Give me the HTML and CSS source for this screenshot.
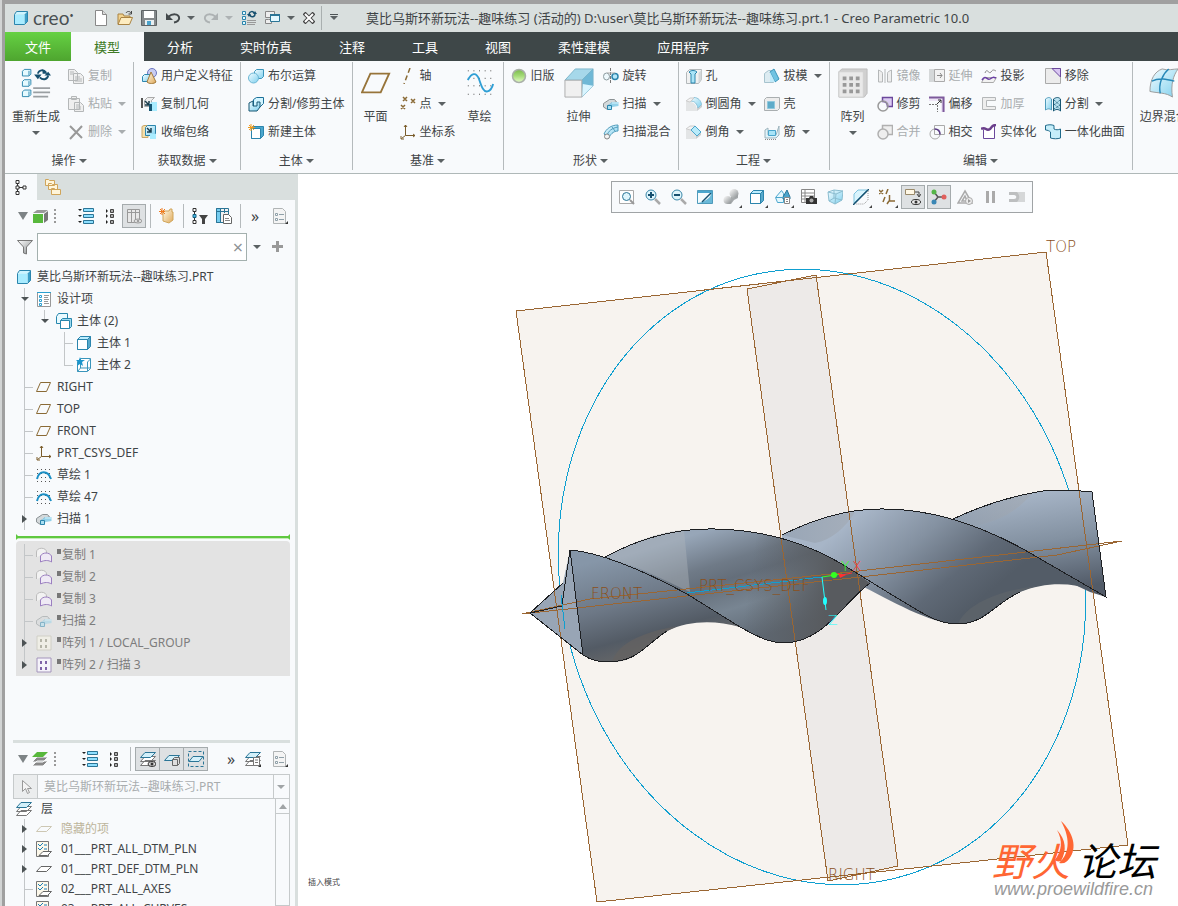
FILE: index.html
```html
<!DOCTYPE html>
<html lang="zh-CN">
<head>
    <meta charset="UTF-8" />
    <meta name="viewport" content="width=device-width, initial-scale=1" />
    <title>Creo Parametric 10.0</title>
    <link rel="stylesheet" href="styles.css">
</head>
<body>
    <svg class="sprite" aria-hidden="true">
        <defs>
            <linearGradient id="gb" x1="0" y1="0" x2="1" y2="1"><stop offset="0" stop-color="#f2fcff"/><stop offset="1" stop-color="#7fd0ee"/></linearGradient>
            <linearGradient id="gt" x1="0" y1="0" x2="1" y2="1"><stop offset="0" stop-color="#fffbea"/><stop offset="1" stop-color="#dfa95a"/></linearGradient>
            <linearGradient id="gg" x1="0" y1="0" x2="1" y2="1"><stop offset="0" stop-color="#fff"/><stop offset="1" stop-color="#858a8c"/></linearGradient>
            <linearGradient id="gn" x1="0" y1="0" x2="0" y2="1"><stop offset="0" stop-color="#79b94a"/><stop offset=".5" stop-color="#a5dc78"/><stop offset="1" stop-color="#e5fbc8"/></linearGradient>
        </defs>
        <!-- title bar -->
        <symbol id="cube" viewBox="0 0 16 16"><path d="M1.500 4.500l2-3h11l-3 3z" fill="#cdf4ff"/><path d="M11.500 4.500l3-3v10l-3 3z" fill="#3c9fc8"/><path d="M1.500 4.500h10v10h-10z" fill="#a9ecff"/><path d="M1.500 4.500l2-3h11v10l-3 3h-10z" fill="none" stroke="#2b85ad"/></symbol>
        <symbol id="new" viewBox="0 0 16 16"><path d="M2.500 .5h7l4 4v11h-11z" fill="#fff" stroke="#888"/><path d="M9.500 .5v4h4" fill="#ddd" stroke="#888"/></symbol>
        <symbol id="open" viewBox="0 0 16 16"><path d="M1 14V4h5l1 2h6v2" fill="#f2d38f" stroke="#a98343"/><path d="M1 14.500l3-7h11.500l-3 7z" fill="#fdecc0" stroke="#a98343"/><path d="M9 3c1-2 4-2 5 0M14.500 1v3h-3" fill="none" stroke="#444"/></symbol>
        <symbol id="save" viewBox="0 0 16 16"><path d="M.5 .5h15v15H.500z" fill="#84898b" stroke="#5f6466"/><path d="M3 1h10v7H3z" fill="#fff"/><path d="M4 10h9v5H4z" fill="#e8eef0"/><path d="M6 11h4v4H6z" fill="#4aa3cc"/></symbol>
        <symbol id="undo" viewBox="0 0 16 16"><path d="M3 7c5-4 10-3 11 0s-2 5-5 5.500" fill="none" stroke="#43494b" stroke-width="2"/><path d="M1 3v7h7z" fill="#43494b"/></symbol>
        <symbol id="redo" viewBox="0 0 16 16"><path d="M13 7C8 3 3 4 2 7s2 5 5 5.500" fill="none" stroke="#adb2b3" stroke-width="2"/><path d="M15 3v7H8z" fill="#adb2b3"/></symbol>
        <symbol id="regen" viewBox="0 0 32 32"><g fill="#e5faff" stroke="#2b85ad"><path d="M1.500 3.500l2-2h7v5l-2 2h-7zM1.500 14.500l2-2h7v5l-2 2h-7zM1.500 25.500l2-2h7v5l-2 2h-7z"/></g><path d="M8.500 3v5M8.500 14v5M8.500 25v5" stroke="#2b85ad"/><path d="M18 6c1-4 6-5 9-1M29 8c-1 5-6 5-9 2" stroke="#17506f" stroke-width="2" fill="none"/><path d="M14 7h8l-4 5zM25 8h7l-3-4zM23 1v5h5z" fill="#17506f"/><path d="M13 21.500h18M13 26h18M13 30.500h16" stroke="#9a9fa2" stroke-width="2"/></symbol>
        <symbol id="regen-s" viewBox="0 0 16 16"><path d="M1.500 1.500h3v3h-3zM1.500 6.500h3v3h-3zM1.500 11.500h3v3h-3z" fill="#e5faff" stroke="#2b85ad"/><path d="M8 4c1-3 4-3 5-1M14 4c0 3-4 4-5 1" fill="none" stroke="#17506f" stroke-width="1.500"/><path d="M6 4h4L8 7zM12 4h4l-2-3z" fill="#17506f"/><path d="M6 10.500h9M6 12.500h9M6 14.500h8" stroke="#999"/></symbol>
        <symbol id="windows" viewBox="0 0 16 16"><path d="M.5 1.500h9v6h-9zM3.500 9.500h-3v4h6v-4z" fill="#eee" stroke="#888"/><path d="M5.500 4.500h9v7h-9z" fill="#e5f8ff" stroke="#2b7596"/><path d="M5 4h10v2H5z" fill="#2b7596"/></symbol>
        <symbol id="closewin" viewBox="0 0 12 12"><path d="M1 1l10 10M11 1L1 11" stroke="#444" stroke-width="4"/><path d="M2 2l8 8M10 2l-8 8" stroke="#fff" stroke-width="2"/></symbol>
        <!-- ribbon -->
        <symbol id="copy" viewBox="0 0 16 16"><g fill="#efefef" stroke="#b4b7b8"><path d="M.5 1.500h6l3 3v8h-9zM5.500 5.500h7l3 3v7h-10z"/><path d="M7 9h5M7 11h7M7 13h7M2 4h4M2 6h3"/></g></symbol>
        <symbol id="paste" viewBox="0 0 16 16"><g fill="#efefef" stroke="#b4b7b8"><path d="M.5 2.500h11v11H.500zM3.500 .5h5v3h-5zM6.500 6.500h6l3 3v6h-9z"/><path d="M8 9h3M8 11h5M8 13h5"/></g></symbol>
        <symbol id="del" viewBox="0 0 16 16"><path d="M2 2l12 12M14 2L2 15" stroke="#999" stroke-width="2"/></symbol>
        <symbol id="udf" viewBox="0 0 16 16"><circle cx="11" cy="5" r="4.500" fill="#c9cdf2" stroke="#6b76c0"/><path d="M1.500 8.500l2-2h6v7h-8z" fill="url(#gb)" stroke="#2d87b0"/><path d="M10 4l5 10c-2 2-7 2-9 0z" fill="url(#gt)" stroke="#a37a3a"/></symbol>
        <symbol id="copygeo" viewBox="0 0 16 16"><path d="M1 2v10" stroke="#555" stroke-width="2"/><path d="M3.500 4.500l3-3h7l-3 3v6h-7z" fill="#eee" stroke="#aaa"/><path d="M4 5l4 4M8 5v4H4" stroke="#1b3d4c" stroke-width="1.500" fill="none"/><path d="M8 8l3-2h5v9H8z" fill="#a9ecff"/><path d="M8 8h3v7H8z" fill="#165673"/></symbol>
        <symbol id="shrink" viewBox="0 0 16 16"><path d="M1 2.500l2-1h4v12H1z" fill="#f6dfaa" stroke="#c9a869"/><path d="M4.500 3.500l2-2h8v8l-2 2h-8z" fill="url(#gb)" stroke="#2b85ad"/><path d="M6 4l4 4M10 4v4H6" stroke="#1b3d4c" fill="none" stroke-width="1.500"/><path d="M9 10h6v5H9z" fill="#a9ecff"/></symbol>
        <symbol id="bool" viewBox="0 0 16 16"><path d="M6.500 3.500l2-2h7v7l-2 2h-7z" fill="url(#gb)" stroke="#3a95bb"/><circle cx="5.500" cy="10" r="5" fill="url(#gb)" stroke="#6bb6d4"/></symbol>
        <symbol id="split" viewBox="0 0 16 16"><path d="M5.500 3.500l3-2h7v6l-4 4h-6z" fill="#d3f5ff" stroke="#1c7099"/><path d="M1 7l4-2v5h4V6h3v5l-3 4H1z" fill="url(#gb)" stroke="#165673"/></symbol>
        <symbol id="newbody" viewBox="0 0 16 16"><path d="M3.500 4.500l2-2h10v9l-3 3h-9z" fill="#4ba6cd" stroke="#2b85ad"/><path d="M3.500 4.500h9v10h-9z" fill="#fff" stroke="#2b85ad"/><path d="M3 0v7M0 3.500h7M1 1l5 5M6 1L1 6" stroke="#ef9b1f"/></symbol>
        <symbol id="plane" viewBox="0 0 32 32"><path d="M10 6h20l-9 20H1z" fill="none" stroke="#97743a" stroke-width="2"/></symbol>
        <symbol id="axis" viewBox="0 0 16 16"><path d="M10 0L4 16" stroke="#8a6a35" stroke-width="1.500" stroke-dasharray="5 3"/></symbol>
        <symbol id="point" viewBox="0 0 16 16"><path d="M3 1l4 4M7 1L3 5M11 3l4 4M15 3l-4 4M1 9l4 4M5 9l-4 4" stroke="#8a6a35" stroke-width="1.500"/></symbol>
        <symbol id="csys" viewBox="0 0 16 16"><path d="M5.500 1v10.500H15M5.500 11.500l-4 3M4 3l1.500-2L7 3M13 10l2 1.500-2 1.500M1 12v3h3" fill="none" stroke="#7a5c2a"/></symbol>
        <symbol id="sketch" viewBox="0 0 32 32"><path d="M3 3h28M3 11h28M3 19h28M3 28h28" stroke="#444" stroke-dasharray="1 5"/><path d="M3 13c4-8 9-9 12-1 3 9 5 14 9 13 4-1 5-4 6-8" fill="none" stroke="#2f9fd5" stroke-width="2"/></symbol>
        <symbol id="legacy" viewBox="0 0 16 16"><circle cx="8" cy="8" r="6.500" fill="url(#gn)" stroke="#a9b0a8" stroke-width="1.500"/></symbol>
        <symbol id="extrude" viewBox="0 0 32 32"><path d="M1 13L12 1h19L19 13z" fill="#a6d8ea" stroke="#7ab4cb"/><path d="M19 13L31 1v18L19 31z" fill="#6fb8d6" stroke="#7ab4cb"/><path d="M19 31l12-12L20 17z" fill="#d9f5ff"/><path d="M1 13h18v18H1z" fill="#f0f0f0" stroke="#aaa"/></symbol>
        <symbol id="revolve" viewBox="0 0 16 16"><path d="M7.500 0v16" stroke="#777" stroke-dasharray="3 1"/><ellipse cx="3.500" cy="8.500" rx="3" ry="3.500" fill="#eef9fd" stroke="#8b9a9f"/><circle cx="12" cy="8.500" r="3" fill="#b7e8fa" stroke="#2b85ad" stroke-width="1.500"/><path d="M4 5h8" stroke="#aaa"/></symbol>
        <symbol id="sweep" viewBox="0 0 16 16"><path d="M.5 7.500L6.500 3.500h5l2 2.500-5 1-4 3v3.500l-4-2.500z" fill="#d4d9db" stroke="#8b9295"/><path d="M4 10l5-4h6.500v4l-6 1-3 3z" fill="#94d2ea"/><path d="M9 7h6.500" stroke="#d9f3fc"/><path d="M4.500 9.500h4v4h-4z" fill="#a9dff2" stroke="#2b85ad"/></symbol>
        <symbol id="blend" viewBox="0 0 16 16"><path d="M1 10C3 5 8 1 15 1v6c-5 0-8 4-9 7z" fill="url(#gb)" stroke="#4f9bbb"/><path d="M4 12C5 7 9 4 15 3M9 3l3 4" fill="none" stroke="#4f9bbb"/><circle cx="4" cy="12.500" r="2.500" fill="#f4f4f4" stroke="#888"/></symbol>
        <symbol id="hole" viewBox="0 0 16 16"><path d="M.5 4.500l3-3h12v10l-3 4H.500z" fill="#f0f1f1" stroke="#b3b8ba"/><path d="M12.500 5v10l3-4V2z" fill="#d3d7d9"/><path d="M3 4c2-2 6-2 8 0L9 6v9H5V6z" fill="#a9e4f7" stroke="#2b85ad"/></symbol>
        <symbol id="round" viewBox="0 0 16 16"><path d="M0 6h5c4 1 6 4 6 9H0z" fill="#e3e5e6"/><path d="M11 15l5-4V8l-5 3z" fill="#c9cdcf"/><path d="M4.500 5L8 1.500c4 0 7 3 7.500 7L12 12C11 8 9 5 4.500 5z" fill="url(#gb)" stroke="#8cc3d9"/><path d="M0 5l4-3h4L4 6z" fill="#f3f3f3" stroke="#ccc"/></symbol>
        <symbol id="chamfer" viewBox="0 0 16 16"><path d="M0 6h5l5 5v4H0z" fill="#e3e5e6"/><path d="M10 15l5-4V8l-5 3z" fill="#c9cdcf"/><path d="M0 5l4-3h5L5 6z" fill="#f3f3f3" stroke="#ccc"/><path d="M5 6l4-4 6 6-4 4z" fill="#b9ebfa" stroke="#4ba6cd"/></symbol>
        <symbol id="draft" viewBox="0 0 16 16"><path d="M.5 5.500l4-3h5v12h-9z" fill="#dcebf1" stroke="#a6c3ce"/><path d="M6 4l4-3 5 10-4 3z" fill="#6fc3e2" stroke="#3a95bb"/><path d="M6 4v10h5z" fill="#bfeafa"/></symbol>
        <symbol id="shell" viewBox="0 0 16 16"><path d="M.5 3.500l2-2h13v11l-2 2H.500z" fill="#ececec" stroke="#a9aeb0"/><path d="M3.500 5.500h7v7h-7z" fill="#5eabc9" stroke="#8fc7dc"/></symbol>
        <symbol id="rib" viewBox="0 0 16 16"><path d="M1 6l3-2v7h8l3-9v9l-3 3H1z" fill="#dff3fa" stroke="#9db4bd"/><path d="M4.500 6.500h7v5h-7z" fill="#a9e4f7" stroke="#4ba6cd"/><path d="M1 15.500h12" stroke="#888" stroke-dasharray="1 1"/></symbol>
        <symbol id="pattern" viewBox="0 0 32 32"><path d="M1 4l3-3h27v26l-3 4H1z" fill="#d0d0d0" stroke="#bcbcbc"/><path d="M1 4h26v27H1z" fill="#e9e9e9" stroke="#d0d0d0"/><g fill="#999"><path d="M5 9h4v4H5zM12 9h4v4h-4zM19 9h4v4h-4zM5 16h4v4H5zM12 16h4v4h-4zM19 16h4v4h-4zM5 23h4v4H5zM12 23h4v4h-4zM19 23h4v4h-4z"/></g></symbol>
        <symbol id="mirror" viewBox="0 0 16 16"><path d="M1.500 2c4 2 4 2 4 4v8h-4zM14.500 2c-4 2-4 2-4 4v8h4zM8 1v14" fill="#eee" stroke="#b4b7b8"/></symbol>
        <symbol id="trim" viewBox="0 0 16 16"><path d="M5.500 1.500h10v9h-5c0-3-2-5-5-5z" fill="#dccdf2" stroke="#6b489c" stroke-width="1.500"/><circle cx="6" cy="10" r="5" fill="none" stroke="#999" stroke-width="1.500"/></symbol>
        <symbol id="merge" viewBox="0 0 16 16"><g fill="#eee" stroke="#b0b0b0" stroke-width="1.500"><path d="M5.500 1.500h10v9h-10z"/><circle cx="6" cy="10" r="5"/></g></symbol>
        <symbol id="extend" viewBox="0 0 16 16"><path d="M0 1h6v13H0z" fill="#d5d8d9"/><path d="M5.500 1.500h10v12h-10z" fill="#f2f2f2" stroke="#aaa"/><path d="M8 7.500h5M11 5l2 2.500-2 2.500" fill="none" stroke="#888"/></symbol>
        <symbol id="offset" viewBox="0 0 16 16"><path d="M0 1h16v15h-4V5H0z" fill="#eee5f6"/><path d="M0 1.500h14.500V16" fill="none" stroke="#7d5a9b" stroke-width="2"/><path d="M0 8.500h8M8.500 9v7" stroke="#777" stroke-dasharray="2 1"/><path d="M8 8l4-4M9 4h3v3" stroke="#333" fill="none"/></symbol>
        <symbol id="intersect" viewBox="0 0 16 16"><g fill="none" stroke="#aaa"><path d="M5.500 1.500h10v9h-10z"/><circle cx="6" cy="10" r="5"/></g><path d="M5.500 5c4 0 5.500 2 5.500 5.500" fill="none" stroke="#5b3b87" stroke-width="1.500"/></symbol>
        <symbol id="project" viewBox="0 0 16 16"><path d="M4 5c2-6 4 2 6-1s3-2 5-1" fill="none" stroke="#888"/><path d="M.5 14.500l3-5h12l-3 5z" fill="#f2f2f2" stroke="#aaa"/><path d="M1 12c4-6 5 1 8-1s3-2 6-1" fill="none" stroke="#6b3fa5" stroke-width="1.500"/></symbol>
        <symbol id="thicken" viewBox="0 0 16 16"><path d="M1.500 1.500h13v3h-9v6h9v3h-13z" fill="#eee" stroke="#b4b7b8"/></symbol>
        <symbol id="solidify" viewBox="0 0 16 16"><path d="M2.500 5.500v9h11V2" fill="#fff" stroke="#6b489c"/><path d="M0 5c5-3 5 3 9 0 3-3 2-4 6-4" fill="none" stroke="#6b3f8b" stroke-width="2.500"/></symbol>
        <symbol id="remove" viewBox="0 0 16 16"><path d="M.5 .5h15v15H.500z" fill="#ececec" stroke="#aaa"/><path d="M7 .5h8.500V9z" fill="#d9c6f2" stroke="#6b489c"/></symbol>
        <symbol id="splitq" viewBox="0 0 16 16"><path d="M.5 3c3-2 4-2 6 0v11c-3-2-4-1-6 0z" fill="url(#gb)" stroke="#4f9bbb"/><path d="M8.500 3c3-2 5-2 7 0v12c-2-2-5-2-7 0z" fill="#b9e2f0" stroke="#165673"/><path d="M9 4l6 5M9 8l6 5M15 4l-6 5M15 9l-6 4" stroke="#165673" stroke-dasharray="1 1"/></symbol>
        <symbol id="unify" viewBox="0 0 16 16"><path d="M.5 6V1.500c3-1 6-1 8.500 0V5c2 1 4 1 6.500 0v9c-3 1-7 1-10 0V8c-1-1-3-2-5-2z" fill="#c5eefa" stroke="#1f6a8a"/></symbol>
        <symbol id="boundary" viewBox="0 0 32 32"><path d="M1 25C1 12 6 4 14 1c6 2 12 0 17 0-5 7-8 16-6 30C18 26 10 27 1 25z" fill="url(#gb)" stroke="#999"/><path d="M12 27c-2-10 2-20 9-26M3 14c8-4 16-2 24 0" fill="none" stroke="#2788b8" stroke-width="1.500"/></symbol>
        <!-- panels -->
        <symbol id="treetab" viewBox="0 0 16 16"><path d="M4.500 4v9M5 8.500h5" stroke="#333"/><path d="M3 1.500h3v3H3zM3 7h3v3H3zM3 12.500h3v3H3zM10 7h3v3h-3z" fill="#fff" stroke="#333"/></symbol>
        <symbol id="folders" viewBox="0 0 16 16"><g fill="#fff5da" stroke="#d0a55a"><path d="M.5 6.500v-6h3l1 1h5v5zM3.500 10.500v-6h3l1 1h5v5zM6.500 15.500v-6h3l1 1h5v5z"/></g></symbol>
        <symbol id="greencube" viewBox="0 0 16 16"><path d="M1 6h10v9H1z" fill="#58b83c"/><path d="M1 5l4-3h11l-4 3z" fill="#999"/><path d="M12 6l4-3v9l-4 3z" fill="#777"/></symbol>
        <symbol id="list" viewBox="0 0 16 16"><path d="M5.500 .5h10v3h-10zM5.500 6.500h10v3h-10zM5.500 12.500h10v3h-10z" fill="#8edfff" stroke="#2b7596"/><path d="M0 1h4L2 3zM0 7h4L2 9zM0 13h4l-2 2z" fill="#222"/></symbol>
        <symbol id="listc" viewBox="0 0 16 16"><path d="M8.500 1.500h3v3h-3zM8.500 6.500h3v3h-3zM8.500 12.500h3v3h-3z" fill="#aaa" stroke="#444"/><path d="M4 1v4l2-2zM4 6v4l2-2zM4 12v4l2-2z" fill="#222"/></symbol>
        <symbol id="cols" viewBox="0 0 16 16"><path d="M1.500 1.500h12v13h-12zM1.500 4.500h12M5.500 2v12M9.500 2v12" fill="#e8e8e8" stroke="#999"/><ellipse cx="12" cy="13" rx="4" ry="2" fill="#ddd" stroke="#999"/><circle cx="12" cy="13" r="1" fill="#888"/></symbol>
        <symbol id="tag" viewBox="0 0 16 16"><path d="M4 3h6l1-2h2v3h1v8l-4 3-6-2z" fill="url(#gt)" stroke="#d0a55a"/><path d="M3 0v7M0 3.500h6M1 1l5 5M6 1L1 6" stroke="#ef7b1f"/></symbol>
        <symbol id="filtree" viewBox="0 0 16 16"><path d="M2.500 3v11" stroke="#333"/><path d="M1 .5h3v3H1zM1 12.500h3v3H1z" fill="#fff" stroke="#333"/><path d="M1 6.500h3v3H1z" fill="#4bb6e4" stroke="#17607f"/><path d="M7 7h9l-3 4v5h-3v-5z" fill="#444"/></symbol>
        <symbol id="coldoc" viewBox="0 0 16 16"><path d="M.5 .5h12v14H.500z" fill="#f2f2f2" stroke="#2b7596"/><path d="M.5 .5h4v14h-4z" fill="#76cdf0" stroke="#2b7596"/><path d="M1 3.500h12M8.500 1v4" stroke="#2b7596"/><path d="M7.500 6.500h5l3 3v6h-8z" fill="#fff" stroke="#666"/><path d="M9 10.500h4M9 12.500h5" stroke="#888"/></symbol>
        <symbol id="doc" viewBox="0 0 16 16"><path d="M1.500 .5h9l3 3v12h-12z" fill="#f4f4f4" stroke="#b0b4b5"/><path d="M3.500 5.500h2v2h-2zM3.500 10.500h2v2h-2zM7 6.500h5M7 11.500h5" fill="#fff" stroke="#8fa0a9"/><path d="M13 16l3-3v3z" fill="#333"/></symbol>
        <symbol id="funnel" viewBox="0 0 16 16"><path d="M.5 1.500h15L9.500 8v7l-3-1V8z" fill="url(#gg)" stroke="#777"/></symbol>
        <symbol id="design" viewBox="0 0 16 16"><path d="M1.500 1.500h13v14h-13z" fill="#fff" stroke="#999"/><path d="M1 1.500h14" stroke="#2ba0d0"/><path d="M3.500 4.500h2v2h-2zM3.500 8.500h2v2h-2zM3.500 12.500h2v2h-2z" fill="#fff" stroke="#2b9fd0"/><path d="M8 4.500h5M8 6.500h4M8 8.500h5M8 10.500h4M8 12.500h5" stroke="#999"/></symbol>
        <symbol id="bodies" viewBox="0 0 16 16"><path d="M.5 3.500l2-3h9v7l-3 3h-8z" fill="#e9faff" stroke="#2787ad"/><path d="M4.500 7.500l2-2h9v8l-2 2h-9z" fill="#9edaf0" stroke="#2787ad"/><path d="M4.500 7.500h9v8h-9z" fill="#fff" stroke="#2787ad"/></symbol>
        <symbol id="body" viewBox="0 0 16 16"><path d="M1.500 4.500l3-3h10v10l-3 3h-10z" fill="#57a9cb" stroke="#2b85ad"/><path d="M1.500 4.500l3-3h10l-3 3z" fill="#bdeeff" stroke="#2b85ad"/><path d="M1.500 4.500h10v10h-10z" fill="#fff" stroke="#2b85ad"/></symbol>
        <symbol id="bodystar" viewBox="0 0 16 16"><path d="M1.500 4.500l3-3h10v10l-3 3h-10zM4.500 2v9h10M4.500 11l-3 3.500M11.500 5v9M11.500 5l3-3" fill="#fff" stroke="#3a95bb"/><path d="M4 0l1 3h4L6 5l1 4-3-2-3 2 1-4-2-2h3z" fill="#1b95cc"/></symbol>
        <symbol id="plane-s" viewBox="0 0 16 16"><path d="M4.500 3.500h10l-4 9H.500z" fill="none" stroke="#8a6a35"/></symbol>
        <symbol id="sketch-s" viewBox="0 0 16 16"><path d="M1 2.500h14M1 6.500h14M1 10.500h14M1 14.500h14" stroke="#555" stroke-dasharray="1 3"/><path d="M1 12c2-9 11-9 14 0" fill="none" stroke="#1b8fc5" stroke-width="2"/></symbol>
        <symbol id="copyq" viewBox="0 0 16 16"><path d="M.5 10V5c0-5 10-5 10 0v2" fill="#f2f2f2" stroke="#bbb"/><path d="M4.500 15V9c2-4 9-4 11 0v6c-3-2-7-2-11 0z" fill="#efeaf5" stroke="#9b7fc0"/></symbol>
        <symbol id="patgray" viewBox="0 0 16 16"><path d="M1 1h14v14H1z" fill="#efeee6" stroke="#d0cfc6"/><path d="M4 4h2v3H4zM9 4h2v3H9zM4 10h2v3H4zM9 10h2v3H9z" fill="#b5b5a8"/></symbol>
        <symbol id="patpur" viewBox="0 0 16 16"><path d="M1 1h14v14H1z" fill="#f5f3fa" stroke="#a394bb"/><path d="M4 4h2v3H4zM9 4h2v3H9zM4 10h2v3H4zM9 10h2v3H9z" fill="#7f63a8"/></symbol>
        <symbol id="layersg" viewBox="0 0 16 16"><path d="M5 10h11l-5 5H0zM5 6h11l-5 5H0z" fill="#888" stroke="#f8fafc"/><path d="M5 1h11l-5 5H0z" fill="#58b83c"/></symbol>
        <symbol id="layers" viewBox="0 0 16 16"><path d="M5 9.500h10.500l-5 5H.500zM5 5.500h10.500l-5 5H.500z" fill="#fff" stroke="#777"/><path d="M5 1.500h10.500l-5 5H.500z" fill="#d3f0fa" stroke="#2b7596"/></symbol>
        <symbol id="layerseye" viewBox="0 0 16 16"><use href="#layers"/><ellipse cx="12" cy="13" rx="4" ry="2.500" fill="#ddd" stroke="#333"/><circle cx="12" cy="13" r="1.500" fill="#333"/></symbol>
        <symbol id="layercube" viewBox="0 0 16 16"><path d="M5 4.500h10.500l-5 5H.500z" fill="#d3f0fa" stroke="#2b7596"/><path d="M8.500 8.500l2-2h5v6l-2 2h-5zM8.500 8.500h5v6" fill="#ddd" stroke="#666"/></symbol>
        <symbol id="layersel" viewBox="0 0 16 16"><path d="M.5 .5h15v15H.500z" fill="none" stroke="#2b7596" stroke-dasharray="3 2"/><path d="M5 5.500h10l-4 5H1z" fill="#d3f0fa" stroke="#2b7596"/></symbol>
        <symbol id="layersdoc" viewBox="0 0 16 16"><use href="#layers"/><path d="M8.500 6.500h6v8h-6zM10 9h3M10 11.500h3" fill="#fff" stroke="#777"/><path d="M13 16l3-3v3z" fill="#333"/></symbol>
        <symbol id="pointer" viewBox="0 0 16 16"><path d="M4.500 1.500v11l3-3 2 5 2-1-2-4h4z" fill="#f4f4f4" stroke="#999"/></symbol>
        <symbol id="layer-h" viewBox="0 0 16 16"><path d="M5 5.500h10.500l-5 5H.500z" fill="none" stroke="#cdc7b3"/></symbol>
        <symbol id="layer-s" viewBox="0 0 16 16"><path d="M5 5.500h10.500l-5 5H.500z" fill="#fff" stroke="#666"/></symbol>
        <symbol id="layerrule" viewBox="0 0 16 16"><path d="M.5 .5h12v15H.500z" fill="#fdf8ea" stroke="#777"/><path d="M2 3l2 2 3-3M2 7l2 2 3-3M8 4h3M8 8h3" fill="none" stroke="#1b7fb8"/><path d="M7 10.500h8.500l-4 4H3z" fill="#fff" stroke="#666"/></symbol>
        <!-- graphics toolbar -->
        <symbol id="zfit" viewBox="0 0 16 16"><path d="M.5 1.500h14v13H.500z" fill="#fff" stroke="#aaa"/><circle cx="7.500" cy="7.500" r="4" fill="#dff5fc" stroke="#2b7596"/><path d="M11 11l4 4" stroke="#999" stroke-width="2"/></symbol>
        <symbol id="zin" viewBox="0 0 16 16"><circle cx="6" cy="6" r="5" fill="#dff5fc" stroke="#3a87a8"/><path d="M10 10l5 5" stroke="#aaa" stroke-width="2.500"/><path d="M3 6h6M6 3v6" stroke="#17506f" stroke-width="2"/></symbol>
        <symbol id="zout" viewBox="0 0 16 16"><circle cx="6" cy="6" r="5" fill="#dff5fc" stroke="#3a87a8"/><path d="M10 10l5 5" stroke="#aaa" stroke-width="2.500"/><path d="M3 6h6" stroke="#17506f" stroke-width="2"/></symbol>
        <symbol id="repaint" viewBox="0 0 16 16"><path d="M.5 1.500h15v13H.500z" fill="#6ab9d8" stroke="#4f9bbb"/><path d="M1 4h13c0 4-4 8-13 10z" fill="#f4fbfd"/><path d="M5 13l9-9" stroke="#17506f" stroke-width="1.500"/><path d="M1 2h14v2H1z" fill="#4ba6cd"/></symbol>
        <symbol id="shade" viewBox="0 0 16 16"><path d="M8 4v5l-4 2v4h4l3-4 4-2V4z" fill="#a5a9ab"/><circle cx="11" cy="4.500" r="4.500" fill="url(#gg)"/><circle cx="4.500" cy="11" r="4" fill="url(#gg)"/></symbol>
        <symbol id="views" viewBox="0 0 16 16"><path d="M.5 8.500l6-7 2 3v9h-6z" fill="#e4f7fd" stroke="#4ba6cd"/><path d="M8 8l4-7 3 7v2H8z" fill="#4ba6cd" stroke="#2b7596"/><path d="M1 8.500h8" stroke="#4ba6cd"/><path d="M9.500 8.500h5v6h-5zM11 10.500h2M11 12.500h2" fill="#fff" stroke="#888"/></symbol>
        <symbol id="camera" viewBox="0 0 16 16"><path d="M.5 .5h13v13H.500zM.5 4h13M.5 7h13M.5 10h13M4 1v12" fill="#fff" stroke="#888"/><path d="M5 9h3l1-2h3l1 2h3v6H5z" fill="#333"/><circle cx="10.500" cy="11.500" r="2" fill="#aaa"/></symbol>
        <symbol id="persp" viewBox="0 0 16 16"><path d="M1 3l6-2 9 1-1 9-7 4-6-3z" fill="url(#gb)" stroke="#8bbdd0"/><path d="M1 3l8 2 7-3M9 5l-1 10M7 1v8l8 2M7 9l-5 3" fill="none" stroke="#8bbdd0"/></symbol>
        <symbol id="section" viewBox="0 0 16 16"><path d="M1 5l4-4h9L1 14z" fill="#d9f4fd" stroke="#7fc3de"/><path d="M0 16L16 0" stroke="#17506f" stroke-width="1.500"/><path d="M15 2v9l-4 4H3" fill="none" stroke="#999" stroke-dasharray="1 1"/></symbol>
        <symbol id="datum" viewBox="0 0 16 16"><path d="M0 1l4 4M4 1L0 5M9 0L7 5M6 8l-2 5M10.500 6v6H16M10 12l-2 3" stroke="#8a6a35" stroke-width="1.500" fill="none"/></symbol>
        <symbol id="annot" viewBox="0 0 16 16"><path d="M.5 .5h9v5h-9z" fill="#fff8e6" stroke="#9a8a6b"/><path d="M10 3h4v4M12 5l2 3 2-3" stroke="#444" fill="none"/><ellipse cx="11" cy="13" rx="4.500" ry="2.500" fill="#eee" stroke="#333"/><circle cx="11" cy="13" r="1.500" fill="#333"/></symbol>
        <symbol id="spin" viewBox="0 0 16 16"><path d="M3 3l4 5-4 5M7 8h6" stroke="#555" stroke-width="1.500" fill="none"/><circle cx="3" cy="3" r="2.500" fill="#55b648"/><circle cx="3" cy="13" r="2.500" fill="#3a87b5"/><circle cx="13" cy="8" r="2.500" fill="#e0605d"/></symbol>
        <symbol id="sim" viewBox="0 0 16 16"><path d="M8 2l7 12H1zM8 7l2 5H5z" fill="none" stroke="#aaa" stroke-width="1.500"/><circle cx="12" cy="12" r="3.500" fill="#eee" stroke="#aaa"/><path d="M11 10l3 2-3 2z" fill="#999"/></symbol>
        <symbol id="pause" viewBox="0 0 16 16"><path d="M3 2h3v12H3zM9 2h3v12H9z" fill="#aaa"/></symbol>
        <symbol id="flow" viewBox="0 0 16 16"><path d="M0 3h16v10H0v-3h5c3 0 3-4 0-4H0z" fill="#bdbfc0"/><path d="M8 3h8v10H8c3-3 3-7 0-10z" fill="#d5d7d8"/></symbol>
    </svg>

    <div class="app">
        <header class="titlebar">
            <svg class="icon"><use href="#cube"/></svg>
            <span class="logo">creo<sup>•</sup></span>
            <button class="qa"><svg class="icon"><use href="#new"/></svg></button>
            <button class="qa"><svg class="icon"><use href="#open"/></svg></button>
            <button class="qa"><svg class="icon"><use href="#save"/></svg></button>
            <button class="qa"><svg class="icon"><use href="#undo"/></svg><i class="caret"></i></button>
            <button class="qa off"><svg class="icon"><use href="#redo"/></svg><i class="caret"></i></button>
            <button class="qa"><svg class="icon"><use href="#regen-s"/></svg></button>
            <button class="qa"><svg class="icon"><use href="#windows"/></svg><i class="caret"></i></button>
            <button class="qa"><svg class="icon small"><use href="#closewin"/></svg></button>
            <button class="qa more"><i class="caret bar"></i></button>
            <h1>莫比乌斯环新玩法--趣味练习 (活动的) D:\user\莫比乌斯环新玩法--趣味练习.prt.1 - Creo Parametric 10.0</h1>
        </header>

        <nav class="tabs">
            <button class="file">文件</button>
            <button class="active">模型</button>
            <button>分析</button>
            <button>实时仿真</button>
            <button>注释</button>
            <button>工具</button>
            <button>视图</button>
            <button>柔性建模</button>
            <button>应用程序</button>
        </nav>

        <div class="ribbon">
            <section class="group">
                <div class="tools">
                    <button class="big wide"><svg><use href="#regen"/></svg><span>重新生成</span><i class="caret"></i></button>
                    <div class="col">
                        <button class="off"><svg class="icon"><use href="#copy"/></svg>复制</button>
                        <button class="off"><svg class="icon"><use href="#paste"/></svg>粘贴<i class="caret"></i></button>
                        <button class="off"><svg class="icon"><use href="#del"/></svg>删除<i class="caret"></i></button>
                    </div>
                </div>
                <button class="name">操作<i class="caret"></i></button>
            </section>
            <section class="group">
                <div class="tools">
                    <div class="col">
                        <button><svg class="icon"><use href="#udf"/></svg>用户定义特征</button>
                        <button><svg class="icon"><use href="#copygeo"/></svg>复制几何</button>
                        <button><svg class="icon"><use href="#shrink"/></svg>收缩包络</button>
                    </div>
                </div>
                <button class="name">获取数据<i class="caret"></i></button>
            </section>
            <section class="group">
                <div class="tools">
                    <div class="col">
                        <button><svg class="icon"><use href="#bool"/></svg>布尔运算</button>
                        <button><svg class="icon"><use href="#split"/></svg>分割/修剪主体</button>
                        <button><svg class="icon"><use href="#newbody"/></svg>新建主体</button>
                    </div>
                </div>
                <button class="name">主体<i class="caret"></i></button>
            </section>
            <section class="group">
                <div class="tools">
                    <button class="big"><svg><use href="#plane"/></svg><span>平面</span></button>
                    <div class="col">
                        <button><svg class="icon"><use href="#axis"/></svg>轴</button>
                        <button><svg class="icon"><use href="#point"/></svg>点<i class="caret"></i></button>
                        <button><svg class="icon"><use href="#csys"/></svg>坐标系</button>
                    </div>
                    <button class="big"><svg><use href="#sketch"/></svg><span>草绘</span></button>
                </div>
                <button class="name">基准<i class="caret"></i></button>
            </section>
            <section class="group">
                <div class="tools">
                    <div class="col">
                        <button><svg class="icon"><use href="#legacy"/></svg>旧版</button>
                    </div>
                    <button class="big"><svg><use href="#extrude"/></svg><span>拉伸</span></button>
                    <div class="col">
                        <button><svg class="icon"><use href="#revolve"/></svg>旋转</button>
                        <button><svg class="icon"><use href="#sweep"/></svg>扫描<i class="caret"></i></button>
                        <button><svg class="icon"><use href="#blend"/></svg>扫描混合</button>
                    </div>
                </div>
                <button class="name">形状<i class="caret"></i></button>
            </section>
            <section class="group">
                <div class="tools">
                    <div class="col">
                        <button><svg class="icon"><use href="#hole"/></svg>孔</button>
                        <button><svg class="icon"><use href="#round"/></svg>倒圆角<i class="caret"></i></button>
                        <button><svg class="icon"><use href="#chamfer"/></svg>倒角<i class="caret"></i></button>
                    </div>
                    <div class="col">
                        <button><svg class="icon"><use href="#draft"/></svg>拔模<i class="caret"></i></button>
                        <button><svg class="icon"><use href="#shell"/></svg>壳</button>
                        <button><svg class="icon"><use href="#rib"/></svg>筋<i class="caret"></i></button>
                    </div>
                </div>
                <button class="name">工程<i class="caret"></i></button>
            </section>
            <section class="group">
                <div class="tools">
                    <button class="big"><svg><use href="#pattern"/></svg><span>阵列</span><i class="caret"></i></button>
                    <div class="col">
                        <button class="off"><svg class="icon"><use href="#mirror"/></svg>镜像</button>
                        <button><svg class="icon"><use href="#trim"/></svg>修剪</button>
                        <button class="off"><svg class="icon"><use href="#merge"/></svg>合并</button>
                    </div>
                    <div class="col">
                        <button class="off"><svg class="icon"><use href="#extend"/></svg>延伸</button>
                        <button><svg class="icon"><use href="#offset"/></svg>偏移</button>
                        <button><svg class="icon"><use href="#intersect"/></svg>相交</button>
                    </div>
                    <div class="col">
                        <button><svg class="icon"><use href="#project"/></svg>投影</button>
                        <button class="off"><svg class="icon"><use href="#thicken"/></svg>加厚</button>
                        <button><svg class="icon"><use href="#solidify"/></svg>实体化</button>
                    </div>
                    <div class="col">
                        <button><svg class="icon"><use href="#remove"/></svg>移除</button>
                        <button><svg class="icon"><use href="#splitq"/></svg>分割<i class="caret"></i></button>
                        <button><svg class="icon"><use href="#unify"/></svg>一体化曲面</button>
                    </div>
                </div>
                <button class="name">编辑<i class="caret"></i></button>
            </section>
            <section class="group">
                <div class="tools">
                    <button class="big wide"><svg><use href="#boundary"/></svg><span>边界混合</span></button>
                </div>
            </section>
        </div>

        <main class="workspace">
            <aside class="sidebar">
                <div class="side-tabs">
                    <button class="active"><svg class="icon"><use href="#treetab"/></svg></button>
                    <button><svg class="icon"><use href="#folders"/></svg></button>
                </div>
                <div class="side-bar">
                    <i class="twist"></i>
                    <button class="mode"><svg class="icon"><use href="#greencube"/></svg></button>
                    <i class="grip"></i>
                    <button><svg class="icon"><use href="#list"/></svg></button>
                    <button><svg class="icon"><use href="#listc"/></svg></button>
                    <button class="on"><svg class="icon"><use href="#cols"/></svg></button>
                    <i class="sep"></i>
                    <button><svg class="icon"><use href="#tag"/></svg></button>
                    <i class="sep"></i>
                    <button><svg class="icon"><use href="#filtree"/></svg></button>
                    <button><svg class="icon"><use href="#coldoc"/></svg></button>
                    <i class="sep"></i>
                    <button class="chev">»</button>
                    <button class="last"><svg class="icon"><use href="#doc"/></svg></button>
                </div>
                <div class="search">
                    <label for="filter"><svg class="icon"><use href="#funnel"/></svg></label>
                    <div class="field">
                        <input type="text" id="filter" aria-label="过滤" />
                        <button aria-label="清除">×</button>
                    </div>
                    <button aria-label="选项"><i class="caret"></i></button>
                    <button class="plus" aria-label="添加"></button>
                </div>

                <div class="tree">
                    <ul>
                        <li><svg class="icon"><use href="#cube"/></svg><span>莫比乌斯环新玩法--趣味练习.PRT</span></li>
                        <li><i class="g open"></i><svg class="icon"><use href="#design"/></svg><span>设计项</span></li>
                        <li><i class="g line"></i><i class="g open end"></i><svg class="icon"><use href="#bodies"/></svg><span>主体 (2)</span></li>
                        <li><i class="g line"></i><i class="g"></i><i class="g tee"></i><svg class="icon"><use href="#body"/></svg><span>主体 1</span></li>
                        <li><i class="g line"></i><i class="g"></i><i class="g tee end"></i><svg class="icon"><use href="#bodystar"/></svg><span>主体 2</span></li>
                        <li><i class="g tee"></i><svg class="icon"><use href="#plane-s"/></svg><span>RIGHT</span></li>
                        <li><i class="g tee"></i><svg class="icon"><use href="#plane-s"/></svg><span>TOP</span></li>
                        <li><i class="g tee"></i><svg class="icon"><use href="#plane-s"/></svg><span>FRONT</span></li>
                        <li><i class="g tee"></i><svg class="icon"><use href="#csys"/></svg><span>PRT_CSYS_DEF</span></li>
                        <li><i class="g tee"></i><svg class="icon"><use href="#sketch-s"/></svg><span>草绘 1</span></li>
                        <li><i class="g tee"></i><svg class="icon"><use href="#sketch-s"/></svg><span>草绘 47</span></li>
                        <li><i class="g closed"></i><svg class="icon"><use href="#sweep"/></svg><span>扫描 1</span></li>
                    </ul>
                    <div class="insert"></div>
                    <ul class="suppressed">
                        <li><i class="g tee"></i><svg class="icon"><use href="#copyq"/></svg><i class="mark"></i><span>复制 1</span></li>
                        <li><i class="g tee"></i><svg class="icon"><use href="#copyq"/></svg><i class="mark"></i><span>复制 2</span></li>
                        <li><i class="g tee"></i><svg class="icon"><use href="#copyq"/></svg><i class="mark"></i><span>复制 3</span></li>
                        <li><i class="g tee"></i><svg class="icon dim"><use href="#sweep"/></svg><i class="mark"></i><span>扫描 2</span></li>
                        <li><i class="g closed"></i><svg class="icon"><use href="#patgray"/></svg><i class="mark"></i><span>阵列 1 / LOCAL_GROUP</span></li>
                        <li><i class="g closed end"></i><svg class="icon"><use href="#patpur"/></svg><i class="mark"></i><span>阵列 2 / 扫描 3</span></li>
                    </ul>
                </div>

                <section class="layers">
                    <div class="side-bar">
                        <i class="twist"></i>
                        <button class="mode"><svg class="icon"><use href="#layersg"/></svg></button>
                        <i class="grip"></i>
                        <button><svg class="icon"><use href="#list"/></svg></button>
                        <button><svg class="icon"><use href="#listc"/></svg></button>
                        <i class="sep"></i>
                        <button class="on"><svg class="icon"><use href="#layerseye"/></svg></button>
                        <button class="on"><svg class="icon"><use href="#layercube"/></svg></button>
                        <button class="on"><svg class="icon"><use href="#layersel"/></svg></button>
                        <button class="chev push">»</button>
                        <button><svg class="icon"><use href="#layersdoc"/></svg></button>
                        <button class="last"><svg class="icon"><use href="#doc"/></svg></button>
                    </div>
                    <div class="model-pick">
                        <button disabled aria-label="选取"><svg class="icon"><use href="#pointer"/></svg></button>
                        <select disabled aria-label="活动模型"><option>莫比乌斯环新玩法--趣味练习.PRT</option></select>
                        <i class="caret"></i>
                    </div>
                    <div class="layer-list">
                        <ul>
                            <li class="root"><svg class="icon"><use href="#layers"/></svg><span>层</span></li>
                            <li class="hid"><i class="g closed"></i><svg class="icon"><use href="#layer-h"/></svg><span>隐藏的项</span></li>
                            <li><i class="g closed"></i><svg class="icon"><use href="#layerrule"/></svg><span>01___PRT_ALL_DTM_PLN</span></li>
                            <li><i class="g closed"></i><svg class="icon"><use href="#layer-s"/></svg><span>01___PRT_DEF_DTM_PLN</span></li>
                            <li><i class="g tee"></i><svg class="icon"><use href="#layerrule"/></svg><span>02___PRT_ALL_AXES</span></li>
                            <li><i class="g tee"></i><svg class="icon"><use href="#layerrule"/></svg><span>03___PRT_ALL_CURVES</span></li>
                        </ul>
                        <div class="scrollbar"><i></i></div>
                    </div>
                </section>
            </aside>

            <div class="canvas">
                <svg class="model" viewBox="298 174 880 732">
                    <defs>
                        <linearGradient id="s1" gradientUnits="userSpaceOnUse" x1="600" y1="560" x2="625" y2="655"><stop offset="0" stop-color="#8696a8"/><stop offset=".5" stop-color="#6d7886"/><stop offset=".85" stop-color="#535b65"/><stop offset="1" stop-color="#606367"/></linearGradient>
                        <linearGradient id="s2" gradientUnits="userSpaceOnUse" x1="715" y1="528" x2="750" y2="640"><stop offset="0" stop-color="#97a6b8"/><stop offset=".3" stop-color="#6f7a87"/><stop offset=".45" stop-color="#646e7a"/><stop offset=".7" stop-color="#788592"/><stop offset="1" stop-color="#5f6974"/></linearGradient>
                        <linearGradient id="s2d" gradientUnits="userSpaceOnUse" x1="750" y1="575" x2="850" y2="590"><stop offset="0" stop-color="#5a5e63" stop-opacity="0"/><stop offset=".8" stop-color="#585b5f"/></linearGradient>
                        <linearGradient id="s3" gradientUnits="userSpaceOnUse" x1="865" y1="510" x2="955" y2="620"><stop offset="0" stop-color="#a7b5c7"/><stop offset=".4" stop-color="#8491a1"/><stop offset=".75" stop-color="#5f6976"/><stop offset="1" stop-color="#535c67"/></linearGradient>
                        <linearGradient id="s4" gradientUnits="userSpaceOnUse" x1="1045" y1="490" x2="1060" y2="590"><stop offset="0" stop-color="#a7b5c7"/><stop offset=".5" stop-color="#8391a1"/><stop offset="1" stop-color="#525b68"/></linearGradient>
                        <linearGradient id="back" x1="0" y1="0" x2="1" y2="0"><stop offset="0" stop-color="#8f9cac"/><stop offset="1" stop-color="#a4aab2"/></linearGradient>
                    </defs>
                    <path d="M516 311L1046 252 1128 845 597 902z" fill="#f7f3ef"/>
                    <path d="M747 289l69-14 82 591-70 15z" fill="#edeae8"/>
                    <ellipse class="line curve" cx="822" cy="577" rx="310" ry="261" transform="rotate(77 822 577)"/>
                    <!-- twisted body, far blade first -->
                    <path fill="url(#s4)" d="M953 519C983 505 1010 496 1043 491Q1068 489 1092 492L1106 597 1090 592 1037 567 953 525z"/>
                    <path fill="url(#back)" opacity=".6" d="M953 519C975 509 1000 500 1032 493 1018 512 995 523 972 526z"/>
                    <path fill="url(#s3)" d="M782 535C810 521 845 509 880 509 945 508 1000 535 1037 557L1093 590C1070 582 1045 582 1020 592 995 603 985 624 958 624 930 624 890 600 860 585L782 545z"/>
                    <path fill="url(#back)" opacity=".6" d="M782 535C805 523 830 516 855 512 846 527 832 540 815 543z"/>
                    <path fill="#60656a" opacity=".6" d="M958 624C966 604 1000 590 1037 586 995 597 985 624 958 624z"/>
                    <path fill="url(#s2)" d="M605 557C640 538 675 528 715 529 775 530 820 550 850 569L870 583C842 604 825 641 785 643 768 643 755 635 740 627L687 604 605 562z"/>
                    <path fill="url(#s2d)" d="M715 529C775 530 820 550 850 569L870 583C842 604 825 641 785 643 768 643 755 635 740 627z"/>
                    <path fill="#adb4bb" opacity=".45" d="M605 557C640 538 665 531 684 530L690 592C660 578 640 567 605 557z"/>
                    <path fill="url(#s1)" d="M570 550C605 553 650 574 687 594L740 627C715 620 690 620 667 631 645 645 638 662 607 662Q594 662 583 655z"/>
                    <path fill="#656361" opacity=".7" d="M612 662C618 642 645 632 677 626 645 641 640 662 612 662z"/>
                    <path fill="#98a5b5" d="M530 613L563 583 570 550 583 655z"/>
                    <g class="line plane">
                        <path d="M516 311L1046 252 1128 845 597 902z"/>
                        <path d="M747 289l69-14 82 591-70 15z"/>
                        <path d="M522 614L590 599 850 572 1122 541 1057 555 860 577z"/>
                    </g>
                    <g class="line edge">
                        <path d="M530 613L563 583M530 613L583 655M562 605L570 550 583 655Q594 662 607 662C638 662 645 645 667 631"/>
                        <path d="M570 550C605 553 650 574 687 594L740 627C755 635 768 643 785 643 825 641 842 604 870 583"/>
                        <path d="M605 557C640 538 675 528 715 529 775 530 820 550 850 569L897 598C920 611 935 624 958 624 985 624 995 603 1020 592"/>
                        <path d="M782 535C810 521 845 509 880 509 945 508 1000 535 1037 557L1106 597 1092 492Q1068 489 1043 491C1010 496 983 505 953 519"/>
                        <path d="M530 613L562 606"/>
                    </g>
                    <path class="line curve" d="M687 593L822 577M561 595l4 34"/>
                    <g class="datum-text">
                        <text x="1046" y="252">TOP</text>
                        <text x="828" y="880">RIGHT</text>
                        <text x="591" y="599">FRONT</text>
                        <text x="699" y="591">PRT_CSYS_DEF</text>
                    </g>
                    <!-- coordinate system triad -->
                    <path d="M822 577l20-3" stroke="#33ff22"/><circle cx="834" cy="575" r="3" fill="#3f2"/>
                    <path d="M842 575l10-2" stroke="#ff3030"/><path d="M838 573l8 2-6 3z" fill="#ff3030"/>
                    <path d="M822 577l4 33" stroke="#2ff"/><ellipse cx="825" cy="601" rx="2" ry="4" fill="#2ff"/>
                    <g class="triad"><text x="841" y="571" fill="#33ff22">Y</text><text x="852" y="571" fill="#ff3030">X</text><text x="828" y="625" fill="#22ffff">Z</text></g>
                    <!-- forum watermark -->
                    <g class="mark-text">
                        <text x="992" y="876" fill="#ff6633">野火</text>
                        <text x="1078" y="876" fill="#000">论坛</text>
                        <text class="url" x="994" y="895">www.proewildfire.cn</text>
                    </g>
                    <path d="M1061 821c12 11 17 27 8 38-3 4-6 5-10 4 9-8 13-22 2-42zM1057 830c9 10 10 20 4 31-3 1-5 0-6-1 7-10 8-19 2-30z" fill="#ff6633"/>
                </svg>
                <div class="view-bar">
                    <button><svg class="icon"><use href="#zfit"/></svg></button>
                    <button><svg class="icon"><use href="#zin"/></svg></button>
                    <button><svg class="icon"><use href="#zout"/></svg></button>
                    <button><svg class="icon"><use href="#repaint"/></svg></button>
                    <button class="drop"><svg class="icon"><use href="#shade"/></svg></button>
                    <button class="drop"><svg class="icon"><use href="#body"/></svg></button>
                    <button class="drop"><svg class="icon"><use href="#views"/></svg></button>
                    <button><svg class="icon"><use href="#camera"/></svg></button>
                    <button><svg class="icon"><use href="#persp"/></svg></button>
                    <button class="drop"><svg class="icon"><use href="#section"/></svg></button>
                    <button class="drop"><svg class="icon"><use href="#datum"/></svg></button>
                    <button class="on"><svg class="icon"><use href="#annot"/></svg></button>
                    <button class="on"><svg class="icon"><use href="#spin"/></svg></button>
                    <button><svg class="icon"><use href="#sim"/></svg></button>
                    <button><svg class="icon"><use href="#pause"/></svg></button>
                    <button><svg class="icon"><use href="#flow"/></svg></button>
                </div>
                <div class="status">插入模式</div>
            </div>
        </main>
    </div>
</body>
</html>
```

FILE: styles.css
```css
* {
    box-sizing: border-box;
}
body {
    margin: 0;
    height: 100vh;
    overflow: hidden;
    padding: 4px 0 0 5px;
    background: linear-gradient(90deg, #d2d4d4 2px, #a0a0a0 2px);
    font-family: "Noto Sans", "Noto Sans CJK SC", sans-serif;
    font-size: 12px;
    line-height: 16px;
    color: #3f4446;
}
button {
    font: inherit;
    color: inherit;
    background: none;
    border: none;
    padding: 0;
    display: flex;
    align-items: center;
    white-space: nowrap;
}
ul {
    list-style: none;
    margin: 0;
    padding: 0;
}
.sprite {
    position: absolute;
    width: 0;
    height: 0;
}
.icon {
    width: 16px;
    height: 16px;
    flex: none;
}
.icon.small {
    width: 12px;
    height: 12px;
}
.dim {
    opacity: 0.5;
}
.caret {
    flex: none;
    border: 4px solid transparent;
    border-top: 4px solid #5b6163;
    border-bottom: 0;
}
.app {
    display: flex;
    flex-direction: column;
    height: 100%;
    background: #f8fafc;
}

/* title bar */
.titlebar {
    display: flex;
    align-items: center;
    flex: none;
    height: 28px;
    padding-left: 8px;
    background: #d9dfde;
}
.logo {
    font: 19px/24px Lato, sans-serif;
    color: #4a5052;
    width: 42px;
    margin: 0 10px 0 4px;
}
.logo sup {
    font-size: 7px;
    line-height: 1px;
    vertical-align: 7px;
}
.qa {
    margin-left: 8px;
}
.qa .caret {
    margin-left: 6px;
}
.qa.off .caret {
    border-top-color: #adb2b3;
}
.titlebar .qa.more {
    height: 24px;
    margin: 0 28px 0 6px;
    border-left: 1px solid #a9afaf;
}
.more .caret {
    margin-left: 8px;
}
.bar {
    position: relative;
}
.bar::before {
    content: "";
    position: absolute;
    left: -4px;
    top: -6px;
    width: 8px;
    height: 1px;
    background: #4d5355;
}
.titlebar h1 {
    margin: 0;
    font-size: 13px;
    font-weight: normal;
    white-space: nowrap;
}

/* ribbon */
.tabs {
    display: flex;
    flex: none;
    height: 29px;
    background: #3e4748;
    font-size: 13px;
    color: #fff;
}
.tabs button {
    padding: 0 24px 0 23px;
}
.tabs .file {
    padding: 0 20px;
    background: linear-gradient(#65d143, #4ea52f);
}
.tabs .active {
    background: #f8fafc;
    color: #3f7a26;
}
.ribbon {
    display: flex;
    flex: none;
    height: 113px;
    overflow: hidden;
    border-bottom: 1px solid #afb8b8;
}
.group {
    display: flex;
    flex-direction: column;
    flex: none;
    margin: 1px 0 3px;
    padding: 0 7px;
    border-right: 1px solid #b5babc;
}
.tools {
    display: flex;
    flex: none;
    gap: 8px;
    height: 84px;
}
.col button {
    height: 28px;
    gap: 4px;
}
.col .caret {
    margin-left: 2px;
}
.off {
    color: #a9adaf;
}
.off .caret {
    border-top-color: #a9adaf;
}
.big {
    flex-direction: column;
    width: 32px;
    padding-top: 6px;
}
.big.wide {
    width: 48px;
}
.big svg {
    width: 30px;
    height: 30px;
}
.big span {
    margin: 11px 0 6px;
}
.name {
    flex: none;
    justify-content: center;
    height: 30px;
    gap: 3px;
}

/* left panel */
.workspace {
    display: flex;
    flex: 1;
    min-height: 0;
}
.sidebar {
    display: flex;
    flex-direction: column;
    flex: 0 0 293px;
    min-width: 0;
    border-right: 3px solid #d9dfde;
}
.side-tabs {
    display: flex;
    flex: none;
    height: 26px;
    background: #d9dfde;
}
.side-tabs button {
    width: 32px;
    justify-content: center;
}
.side-tabs .active {
    background: #f8fafc;
}
.side-bar {
    display: flex;
    align-items: center;
    flex: none;
    height: 32px;
    padding-left: 13px;
}
.side-bar button {
    flex: none;
    justify-content: center;
    width: 24px;
    height: 24px;
}
.side-bar .last {
    width: 20px;
    margin-left: auto;
    margin-right: 5px;
}
.side-bar .mode {
    width: 20px;
    margin-left: 2px;
}
.side-bar .on,
.view-bar .on {
    background: #dee1e3;
    border: 1px solid #a5abad;
}
.twist {
    border: 5px solid transparent;
    border-top: 8px solid #7d8385;
    border-bottom: 0;
}
.grip {
    flex: none;
    width: 2px;
    height: 14px;
    margin: 0 18px 0 4px;
    background: repeating-linear-gradient(#999 0 2px, transparent 2px 4px);
}
.sep {
    flex: none;
    width: 1px;
    height: 24px;
    margin: 0 4px;
    background: #b5babc;
}
.side-bar .chev {
    width: 20px;
    font-size: 16px;
}
.side-bar .push {
    margin-left: 14px;
}
.search {
    display: flex;
    align-items: center;
    flex: none;
    height: 29px;
    padding-left: 12px;
    gap: 6px;
}
.search label {
    display: flex;
    width: 16px;
    margin-right: -2px;
}
.field {
    display: flex;
    width: 210px;
    height: 28px;
    border: 1px solid #a3b0ae;
    background: #fff;
}
.field input {
    flex: 1;
    min-width: 0;
    border: none;
    background: none;
    font: inherit;
}
.field button {
    padding-right: 3px;
    font-size: 18px;
    color: #8d9294;
}
.plus {
    width: 11px;
    height: 11px;
    margin-left: 5px;
    background: linear-gradient(#999, #999) center / 11px 3px no-repeat, linear-gradient(#999, #999) center / 3px 11px no-repeat;
}
.tree {
    flex: 1;
    min-height: 0;
    padding: 5px 5px 0 11px;
}
.tree li {
    display: flex;
    align-items: center;
    height: 22px;
}
.tree li .icon {
    margin-right: 5px;
}
.g {
    position: relative;
    flex: none;
    width: 20px;
    align-self: stretch;
}
.g.line,
.g.tee,
.g.closed,
.g.open {
    background: linear-gradient(#c3c6c8, #c3c6c8) 8px 0 / 1px 100% no-repeat;
}
.g.tee {
    background: linear-gradient(#c3c6c8, #c3c6c8) 8px 0 / 1px 100% no-repeat, linear-gradient(#c3c6c8, #c3c6c8) 8px 50% / 9px 1px no-repeat;
}
.g.end {
    background-size: 1px 50%;
}
.g.tee.end {
    background-size: 1px 50%, 9px 1px;
}
.g.open::after,
.g.closed::after {
    content: "";
    position: absolute;
    left: 5px;
    top: 50%;
    margin-top: -2px;
    border: 4px solid transparent;
    border-top: 4px solid #4d5355;
    border-bottom: 0;
}
.g.closed::after {
    left: 6px;
    margin-top: -4px;
    border: 4px solid transparent;
    border-left: 5px solid #4d5355;
    border-right: 0;
}
.insert {
    height: 2px;
    margin: 6px 0 3px;
    background: #5fc83f;
    box-shadow: 0 1px #c5eab9;
    position: relative;
}
.insert::before,
.insert::after {
    content: "";
    position: absolute;
    top: -2px;
    border: 3px solid transparent;
}
.insert::before {
    left: 0;
    border-left-color: #5fc83f;
    border-right: 0;
}
.insert::after {
    right: 0;
    border-right-color: #5fc83f;
    border-left: 0;
}
.suppressed {
    padding-top: 3px;
    background: #e3e3e3;
    border-radius: 4px 4px 0 0;
    color: #7d7d7d;
}
.mark {
    width: 4px;
    height: 5px;
    margin: -8px 1px 0 0;
    background: #777;
}

/* layers */
.layers {
    flex: 0 0 166px;
    display: flex;
    flex-direction: column;
    margin: 0 5px 0 8px;
    overflow: hidden;
    border-top: 3px solid #d9dfde;
}
.layers .side-bar {
    height: 31px;
    padding-left: 5px;
}
.layers .grip {
    margin-right: 22px;
}
.layers .side-bar .on {
    width: 25px;
    margin-right: -1px;
}
.layers .side-bar .last {
    margin-right: 0;
}
.model-pick {
    display: flex;
    align-items: center;
    flex: none;
    height: 25px;
    padding-right: 4px;
    border: 1px solid #c6cacb;
    color: #a9adaf;
}
.model-pick button {
    justify-content: center;
    align-self: stretch;
    width: 24px;
    background: #ebedee;
    border-right: 1px solid #c6cacb;
}
.model-pick select {
    flex: 1;
    align-self: stretch;
    appearance: none;
    border: none;
    border-right: 1px solid #c6cacb;
    margin-right: 3px;
    padding: 0 0 0 6px;
    background: none;
    font: inherit;
    color: #a9adaf;
    opacity: 1;
}
.model-pick .caret {
    border-top-color: #a0a4a6;
}
.layer-list {
    display: flex;
    flex: 1;
    min-height: 0;
}
.layer-list ul {
    flex: 1;
    padding-left: 3px;
}
.layer-list li {
    display: flex;
    align-items: center;
    height: 20px;
}
.layer-list li .icon {
    margin-right: 9px;
}
.layer-list .hid {
    color: #bdb59b;
}
.scrollbar {
    width: 15px;
    border: 1px solid #c6cacb;
    border-top: none;
}
.scrollbar i {
    display: block;
    height: 15px;
    border-bottom: 1px solid #c6cacb;
}
.scrollbar i::before {
    content: "";
    display: block;
    width: 0;
    margin: 0 auto;
    padding-top: 5px;
    border: 4px solid transparent;
    border-top: 0;
    border-bottom: 5px solid #a0a4a6;
}

/* graphics area */
.canvas {
    position: relative;
    flex: 1;
    min-width: 0;
    background: #fff;
}
.model {
    display: block;
    width: 100%;
    height: 100%;
}
.line {
    fill: none;
    stroke-width: 1;
    shape-rendering: crispEdges;
}
.plane {
    stroke: #9a6633;
}
.curve {
    stroke: #0f9fd0;
}
.edge {
    stroke: #1d1f22;
}
.datum-text {
    font: 200 15px "DejaVu Sans", sans-serif;
    fill: #8a4f1a;
}
.triad {
    font: 200 14px "DejaVu Sans", sans-serif;
}
.mark-text {
    font: italic 400 39px "Noto Sans CJK SC", sans-serif;
}
.mark-text .url {
    font: italic 18px "Liberation Sans", sans-serif;
    fill: #999;
}
.view-bar {
    position: absolute;
    left: 313px;
    top: 7px;
    display: flex;
    padding: 2px;
    border: 1px solid #a0a4a6;
    background: #f8fafc;
}
.view-bar button {
    position: relative;
    justify-content: center;
    width: 26px;
    height: 26px;
}
.view-bar .on {
    width: 24px;
    height: 24px;
    margin: 1px;
}
.drop::after {
    content: "";
    position: absolute;
    right: 2px;
    bottom: 2px;
    border-left: 3px solid transparent;
    border-bottom: 3px solid #444;
}
.status {
    position: absolute;
    left: 10px;
    bottom: 16px;
    font-size: 8px;
    line-height: 16px;
}
```
